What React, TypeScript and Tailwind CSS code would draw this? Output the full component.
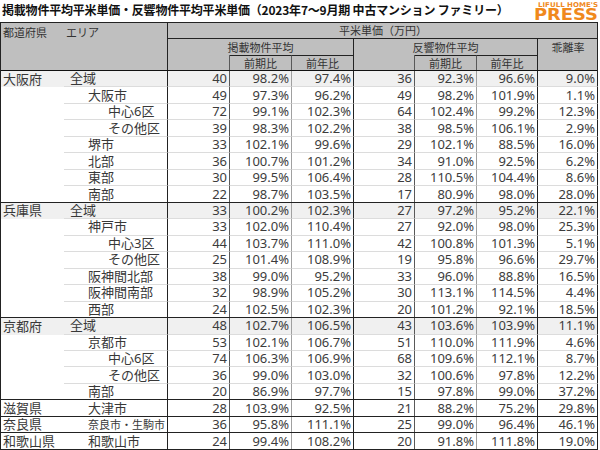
import React from "react";

type Row = {
  pref?: string;
  area: string;
  lvl: 0 | 1 | 2;
  v: string[];
  last?: boolean;
  small?: boolean;
};

const rows: Row[] = [
  { pref: "大阪府", area: "全域", lvl: 0, v: ["40", "98.2%", "97.4%", "36", "92.3%", "96.6%", "9.0%"] },
  { area: "大阪市", lvl: 1, v: ["49", "97.3%", "96.2%", "49", "98.2%", "101.9%", "1.1%"] },
  { area: "中心6区", lvl: 2, v: ["72", "99.1%", "102.3%", "64", "102.4%", "99.2%", "12.3%"] },
  { area: "その他区", lvl: 2, v: ["39", "98.3%", "102.2%", "38", "98.5%", "106.1%", "2.9%"] },
  { area: "堺市", lvl: 1, v: ["33", "102.1%", "99.6%", "29", "102.1%", "88.5%", "16.0%"] },
  { area: "北部", lvl: 1, v: ["36", "100.7%", "101.2%", "34", "91.0%", "92.5%", "6.2%"] },
  { area: "東部", lvl: 1, v: ["30", "99.5%", "106.4%", "28", "110.5%", "104.4%", "8.6%"] },
  { area: "南部", lvl: 1, v: ["22", "98.7%", "103.5%", "17", "80.9%", "98.0%", "28.0%"], last: true },
  { pref: "兵庫県", area: "全域", lvl: 0, v: ["33", "100.2%", "102.3%", "27", "97.2%", "95.2%", "22.1%"] },
  { area: "神戸市", lvl: 1, v: ["33", "102.0%", "110.4%", "27", "92.0%", "98.0%", "25.3%"] },
  { area: "中心3区", lvl: 2, v: ["44", "103.7%", "111.0%", "42", "100.8%", "101.3%", "5.1%"] },
  { area: "その他区", lvl: 2, v: ["25", "101.4%", "108.9%", "19", "95.8%", "96.6%", "29.7%"] },
  { area: "阪神間北部", lvl: 1, v: ["38", "99.0%", "95.2%", "33", "96.0%", "88.8%", "16.5%"] },
  { area: "阪神間南部", lvl: 1, v: ["32", "98.9%", "105.2%", "30", "113.1%", "114.5%", "4.4%"] },
  { area: "西部", lvl: 1, v: ["24", "102.5%", "102.3%", "20", "101.2%", "92.1%", "18.5%"], last: true },
  { pref: "京都府", area: "全域", lvl: 0, v: ["48", "102.7%", "106.5%", "43", "103.6%", "103.9%", "11.1%"] },
  { area: "京都市", lvl: 1, v: ["53", "102.1%", "106.7%", "51", "110.0%", "111.9%", "4.6%"] },
  { area: "中心6区", lvl: 2, v: ["74", "106.3%", "106.9%", "68", "109.6%", "112.1%", "8.7%"] },
  { area: "その他区", lvl: 2, v: ["36", "99.0%", "103.0%", "32", "100.6%", "97.8%", "12.2%"] },
  { area: "南部", lvl: 1, v: ["20", "86.9%", "97.7%", "15", "97.8%", "99.0%", "37.2%"], last: true },
  { pref: "滋賀県", area: "大津市", lvl: 1, v: ["28", "103.9%", "92.5%", "21", "88.2%", "75.2%", "29.8%"], last: true },
  { pref: "奈良県", area: "奈良市・生駒市", lvl: 1, small: true, v: ["36", "95.8%", "111.1%", "25", "99.0%", "96.4%", "46.1%"], last: true },
  { pref: "和歌山県", area: "和歌山市", lvl: 1, v: ["24", "99.4%", "108.2%", "20", "91.8%", "111.8%", "19.0%"], last: true },
];

const GRID =
  "grid grid-cols-[63px_104px_62px_62px_62px_61px_62px_61px_60px]";

const numBorders = [
  "border-r-[#595959]",
  "border-r-[#a0a0a0]",
  "border-r-[#222222]",
  "border-r-[#595959]",
  "border-r-[#a0a0a0]",
  "border-r-[#222222]",
  "border-r-transparent",
];

const indent = ["pl-[6px]", "pl-[24px]", "pl-[44px]"];

function DataRow({ r }: { r: Row }) {
  const rowCls = [
    GRID,
    "h-[16.48px]",
    r.lvl === 0 ? "bg-[#f0f0f0]" : "bg-white",
    r.last ? "border-b border-b-[#222222]" : "",
  ].join(" ");
  const cellB = r.last ? "" : "border-b border-b-[#dcdcdc]";
  return (
    <div className={rowCls}>
      <div className="flex items-center pl-[2px] text-[13px] leading-none text-[#383838]">
        {r.pref ?? ""}
      </div>
      <div
        className={`flex items-center border-r border-r-[#222222] ${cellB} ${indent[r.lvl]} ${
          r.small ? "text-[11px]" : "text-[13px]"
        } leading-none text-[#383838]`}
      >
        {r.area}
      </div>
      {r.v.map((x, i) => (
        <div
          key={i}
          className={`flex items-center justify-end pr-[2px] border-r ${numBorders[i]} ${cellB} text-[13px] leading-none text-[#3c3c3c]`}
        >
          {x}
        </div>
      ))}
    </div>
  );
}

function Header() {
  return (
    <div
      className={`${GRID} grid-rows-[16px_16px_15px] bg-[#bfbfbf] border-b border-b-[#111] text-[11px] leading-none text-[#333]`}
    >
      <div className="col-span-2 row-span-3 border-r border-r-[#222222] flex pt-[4px]">
        <span className="w-[65px] pl-[2px]">都道府県</span>
        <span>エリア</span>
      </div>
      <div className="col-span-7 flex items-center justify-center border-b border-b-[#222222]">
        平米単価（万円）
      </div>
      <div className="col-span-3 flex items-center justify-center border-r border-r-[#222222]">
        掲載物件平均
      </div>
      <div className="col-span-3 flex items-center justify-center border-r border-r-[#222222]">
        反響物件平均
      </div>
      <div className="row-span-2 flex items-start justify-center pt-[3px]">乖離率</div>
      <div className="border-r border-r-[#595959]" />
      <div className="flex items-center justify-center border-t border-t-[#222222] border-r border-r-[#595959]">
        前期比
      </div>
      <div className="flex items-center justify-center border-t border-t-[#222222] border-r border-r-[#222222]">
        前年比
      </div>
      <div className="border-r border-r-[#595959]" />
      <div className="flex items-center justify-center border-t border-t-[#222222] border-r border-r-[#595959]">
        前期比
      </div>
      <div className="flex items-center justify-center border-t border-t-[#222222] border-r border-r-[#222222]">
        前年比
      </div>
    </div>
  );
}

function Logo() {
  return (
    <svg width="68" height="26" viewBox="0 0 68 26" className="block shrink-0 overflow-visible">
      <text
        fontFamily="DejaVu Sans, sans-serif"
        fontWeight="bold"
        fill="#f0891d"
      >
        <tspan x="6" y="7" fontSize="6.6" textLength="60" lengthAdjust="spacingAndGlyphs">
          LIFULL HOME'S
        </tspan>
        <tspan x="2" y="20" fontSize="16.5" textLength="64" lengthAdjust="spacingAndGlyphs">
          PRESS
        </tspan>
      </text>
    </svg>
  );
}

export default function App() {
  return (
    <div className="w-[600px] h-[450px] bg-white overflow-hidden font-['Noto_Sans','Noto_Sans_CJK_JP',sans-serif]">
      <div className="flex h-[22px] items-start justify-between">
        <div className="pl-[2px] pt-[4px] text-[12px] font-bold leading-none tracking-[-0.2px] text-[#111] font-['Noto_Sans_CJK_JP',sans-serif]">
          掲載物件平均平米単価・反響物件平均平米単価（2023年7～9月期 中古マンション ファミリー）
        </div>
        <Logo />
      </div>
      <div className="relative w-[598px] border-l border-t border-r border-[#222222] border-r-[#222222] bg-white">
        <Header />
        {rows.map((r, i) => (
          <DataRow key={i} r={r} />
        ))}
      </div>
    </div>
  );
}
